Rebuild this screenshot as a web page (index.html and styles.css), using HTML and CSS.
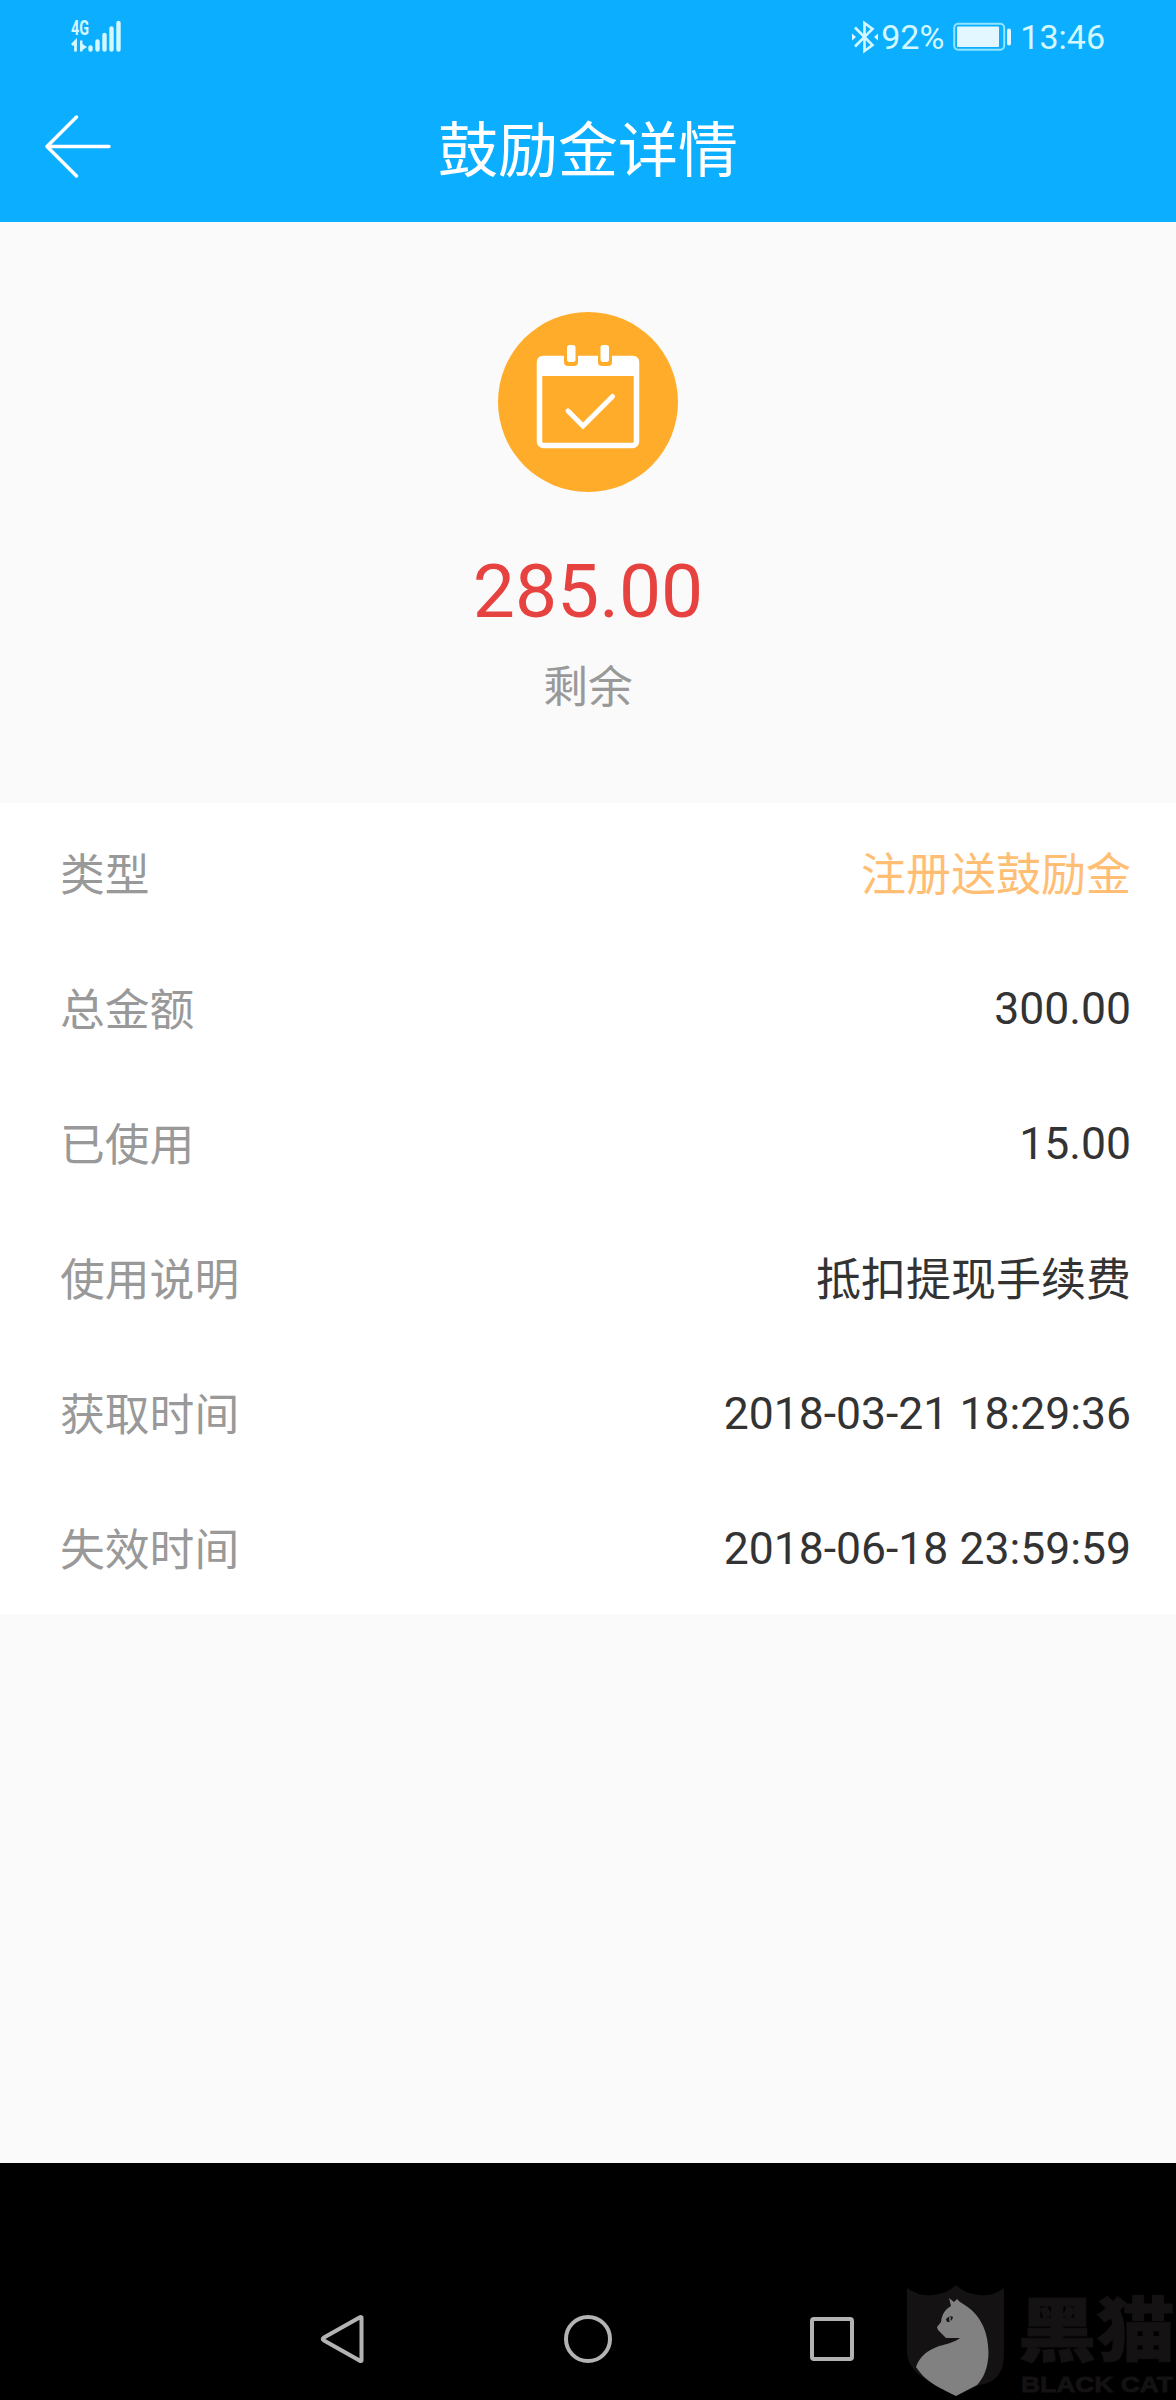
FILE: index.html
```html
<!DOCTYPE html>
<html lang="zh-CN">
<head>
<meta charset="utf-8">
<title>鼓励金详情</title>
<link rel="stylesheet" href="styles.css">
</head>
<body>
<div class="screen">
  <header class="header">
    <div class="status">
      <svg class="signal" width="54" height="44" viewBox="-1 -10 54 44">
        <text class="network" x="0" y="14.500" textLength="18" lengthAdjust="spacingAndGlyphs">4G</text>
        <path d="M1 25L4.500 21.500V31.500" />
        <path class="data" d="M9 20.500H11.500V24L16 27L11.500 30V31.500H9ZM1 25L5.500 20.500V26Z" />
        <path class="bars" d="M19.500 27.500V29.500M26.500 21.500V29.500M33.500 15V29.500M40.500 8.500V29.500M47.500 3V29.500" />
      </svg>
      <div class="status-right">
        <svg class="bluetooth" width="26" height="34" viewBox="0 0 26 34">
          <path d="M3 7.500L20.500 25L12.500 31V3L20.500 9L3 26.500" />
          <path class="solid" d="M0 13.500L4 17L0 20.500ZM26 13.500L22 17L26 20.500Z" />
        </svg>
        <span class="percent">92%</span>
        <svg class="battery" width="60" height="30" viewBox="0 0 60 30">
          <rect x="1.200" y="1.700" width="50" height="26" rx="4" />
          <rect class="solid" x="4" y="4.500" width="42" height="20.500" rx="1" />
          <rect class="solid" x="54" y="6.500" width="4" height="17" rx="2" />
        </svg>
        <span class="clock">13:46</span>
      </div>
    </div>
    <div class="titlebar">
      <svg class="back" width="68" height="66" viewBox="0 0 68 66">
        <path d="M32.500 3L3 32.500L32.500 62M3 32.500H65" />
      </svg>
      <h1 class="title">鼓励金详情</h1>
    </div>
  </header>

  <section class="summary">
    <svg class="badge" width="180" height="180" viewBox="0 0 180 180">
      <circle cx="90" cy="90" r="90" fill="#ffac2a" />
      <rect x="41.500" y="46.500" width="97" height="87" rx="4" fill="none" stroke="#fff" stroke-width="5.500" />
      <path d="M39 64V50Q39 44 45 44H135Q141 44 141 50V64Z" fill="#fff" />
      <path d="M66 42V50Q66 54 70 54H76Q80 54 80 50V42ZM100 42V50Q100 54 104 54H110Q114 54 114 50V42Z" fill="#ffac2a" />
      <rect x="69" y="33" width="8.500" height="17" rx="2.500" fill="#fff" />
      <rect x="102.500" y="33" width="8.500" height="17" rx="2.500" fill="#fff" />
      <path d="M70 99L85 114L114.500 84.500" fill="none" stroke="#fff" stroke-width="5" stroke-linecap="round" />
    </svg>
    <div class="amount">285.00</div>
    <div class="caption">剩余</div>
  </section>

  <dl class="details">
    <div class="row"><dt>类型</dt><dd class="accent">注册送鼓励金</dd></div>
    <div class="row"><dt>总金额</dt><dd class="number">300.00</dd></div>
    <div class="row"><dt>已使用</dt><dd class="number">15.00</dd></div>
    <div class="row"><dt>使用说明</dt><dd>抵扣提现手续费</dd></div>
    <div class="row"><dt>获取时间</dt><dd class="number">2018-03-21 18:29:36</dd></div>
    <div class="row"><dt>失效时间</dt><dd class="number">2018-06-18 23:59:59</dd></div>
  </dl>

  <nav class="navbar">
    <svg class="nav-icon" width="50" height="50" viewBox="0 0 50 50"><path d="M42.500 3.500V46.500Q42 47.500 40.500 46.500L5 26.500Q2.500 25 5 23.500L40.500 3.500Q42 2.500 42.500 3.500Z" /></svg>
    <svg class="nav-icon" width="50" height="50" viewBox="0 0 50 50"><circle cx="25" cy="25" r="22" /></svg>
    <svg class="nav-icon" width="50" height="50" viewBox="0 0 50 50"><rect x="5" y="5" width="40" height="40" rx="2" /></svg>
    <svg class="watermark" width="276" height="130" viewBox="0 -10 276 130">
      <path fill="#141213" d="M7 8Q20 17 34 15Q48 13 56 5Q64 13 78 15Q92 17 104 8V75Q104 101 80 105L56 116L33 104Q7 90 7 72Z" />
      <path fill="#818181" d="M49 18L54 22L57 19L60 22C80 33 88 50 88.500 72C88.500 88 83 99 77 105L56 116C43 109 27 104 16 87C22 71 35 67 47 64C53 62 58 60 60 58H46L38 50L37 47L41 42C42 33 46 29 51 26Z" />
      <path fill="#141213" d="M46 39Q50 35 53 37Q52 42 47 42Z" />
      <path stroke="#818181" stroke-width="1.500" d="M50 37V41" />
      <text class="brand-cn" x="118" y="76" textLength="157" lengthAdjust="spacingAndGlyphs">黑猫</text>
      <text class="brand-en" x="121" y="112" textLength="152" lengthAdjust="spacingAndGlyphs">BLACK CAT</text>
    </svg>
  </nav>
</div>
</body>
</html>
```
FILE: styles.css
```css
* {
  box-sizing: border-box;
}

body {
  margin: 0;
  background: #000;
  font-family: Roboto, "Noto Sans CJK SC", sans-serif;
}

.screen {
  display: flex;
  flex-direction: column;
  width: 1176px;
  height: 2400px;
  background: #fafafa;
}

.header {
  height: 222px;
  background: #0cafff;
  color: #fff;
}

.status {
  display: flex;
  justify-content: space-between;
  height: 72px;
  padding: 0 71px 0 70px;
}

.signal {
  margin-top: 10px;
  fill: none;
  stroke: #d4f8ff;
  stroke-width: 2.8;
}

.signal .data {
  fill: #d4f8ff;
  stroke: none;
}

.signal .bars {
  stroke-width: 4.4;
  stroke-linecap: round;
}

.network {
  fill: #d4f8ff;
  stroke: none;
  font-size: 20px;
  font-weight: 700;
}

.status-right {
  display: flex;
  height: 72px;
  padding-top: 1px;
  align-items: center;
  color: #d4f8ff;
  font-size: 34px;
  line-height: 40px;
}

.bluetooth {
  fill: none;
  stroke: #d4f8ff;
  stroke-width: 2.6;
}

.battery {
  margin: 0 7px 0 9px;
  fill: none;
  stroke: #8fe4ff;
  stroke-width: 2;
}

.status-right .solid {
  fill: #e2f7ff;
  stroke: none;
}

.percent {
  margin-left: 3px;
}

.titlebar {
  display: grid;
  grid-template-columns: 156px 1fr 156px;
  align-items: center;
  height: 150px;
}

.back {
  margin: 0 0 1px 44px;
  fill: none;
  stroke: #fff;
  stroke-width: 3.5;
  stroke-linecap: round;
  stroke-linejoin: round;
}

.title {
  margin: 0;
  padding-top: 9px;
  text-align: center;
  font-size: 60px;
  font-weight: 400;
  line-height: 90px;
}

.summary {
  display: flex;
  flex-direction: column;
  align-items: center;
  height: 581px;
  padding-top: 90px;
}

.amount {
  margin-top: 49px;
  color: #e64340;
  font-size: 75px;
  line-height: 100px;
}

.caption {
  margin-top: 14px;
  color: #999;
  font-size: 44.8px;
  line-height: 66px;
}

.details {
  margin: 0;
  padding: 1px 45px 0 60px;
  height: 811px;
  background: #fff;
  font-size: 44.8px;
}

.row {
  display: flex;
  justify-content: space-between;
  align-items: center;
  height: 135px;
}

.row dt {
  color: #999;
}

.row dd {
  margin: 0;
  color: #333;
  font-size: 45px;
}

.row .number {
  padding-top: 4px;
  font-size: 44.5px;
}

.row .accent {
  color: #ffbe74;
}

.navbar {
  position: relative;
  display: flex;
  justify-content: center;
  gap: 194px;
  height: 237px;
  margin-top: auto;
  padding-top: 151px;
  background: #000;
}

.nav-icon {
  fill: none;
  stroke: #b3b3b3;
  stroke-width: 4;
}

.watermark {
  position: absolute;
  right: 0;
  bottom: 0;
}

.brand-cn {
  fill: #141213;
  stroke: #141213;
  stroke-width: 1;
  font-family: "Noto Sans CJK SC", sans-serif;
  font-size: 70px;
  font-weight: 900;
}

.brand-en {
  fill: #141213;
  stroke: #141213;
  stroke-width: 0.8;
  font-family: "Liberation Sans", sans-serif;
  font-size: 22px;
  font-weight: 700;
}
```
